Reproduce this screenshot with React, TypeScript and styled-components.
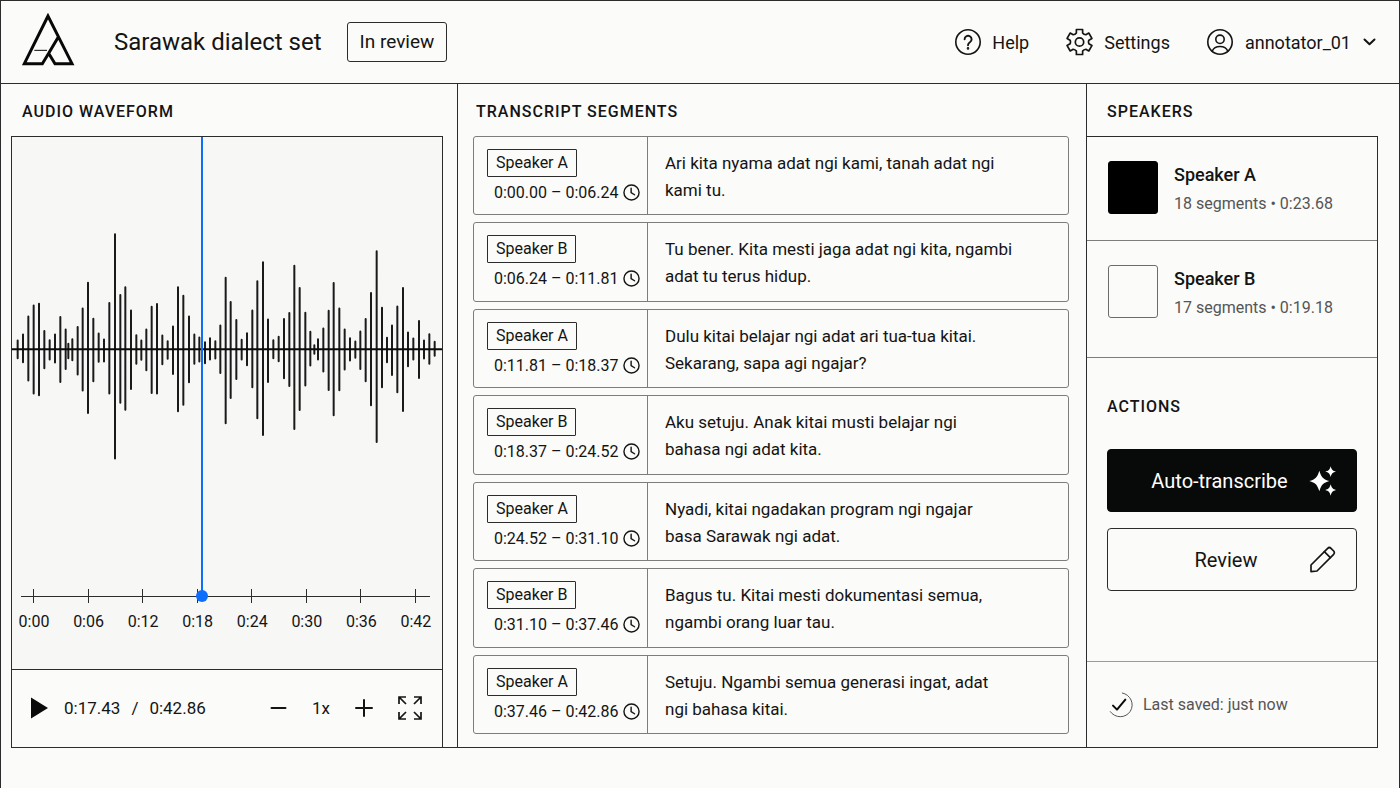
import React from "react";
import styled, { createGlobalStyle } from "styled-components";

const ink = "#141414";
const line = "#2c2c2c";
const softLine = "#7d7d7d";
const muted = "#555555";
const accent = "#0d6efd";

const GlobalStyle = createGlobalStyle`
  *, *::before, *::after { box-sizing: border-box; }
  body {
    margin: 0;
    background: #fbfbf9;
    color: ${ink};
    font-family: Roboto, "Liberation Sans", sans-serif;
    font-size: 16px;
  }
  h1, h2, h3, p, ol, ul { margin: 0; padding: 0; font-weight: 400; }
  ol, ul { list-style: none; }
  svg { display: block; flex: none; }
  button { font: inherit; color: inherit; cursor: pointer; }
`;

const Frame = styled.div`
  display: flex;
  flex-direction: column;
  min-height: 100vh;
  padding-bottom: 40px;
  border: 1px solid ${line};
  border-bottom: 0;
`;

const Header = styled.header`
  display: flex;
  align-items: center;
  height: 83px;
  padding: 0 23px 0 20px;
  border-bottom: 1px solid ${line};
`;

const HomeLink = styled.a`
  padding-bottom: 6px;
`;

const ProjectTitle = styled.h1`
  margin-left: 39px;
  font-size: 24px;
  line-height: 32px;
`;

const StatusBadge = styled.span`
  margin-left: 25px;
  padding: 0 12px;
  border: 1px solid ${line};
  border-radius: 3px;
  font-size: 19px;
  line-height: 38px;
`;

const HeaderNav = styled.nav`
  display: flex;
  align-items: center;
  gap: 37px;
  margin-left: auto;
  font-size: 18px;
`;

const NavLink = styled.a`
  display: flex;
  align-items: center;
  gap: 11px;
  color: inherit;
  text-decoration: none;
`;

const AccountButton = styled.button`
  display: flex;
  align-items: center;
  gap: 12px;
  padding: 0;
  border: 0;
  background: none;
`;

const Workspace = styled.main`
  flex: 1;
  display: grid;
  grid-template-columns: minmax(0, 447fr) minmax(0, 628fr) minmax(0, 292fr);
  margin: 0 21px 0 10px;
  border-bottom: 1px solid ${line};
`;

const Column = styled.section<{ $rule?: "left" | "right" }>`
  display: flex;
  flex-direction: column;
  ${(p) => p.$rule && `border-${p.$rule}: 1px solid ${line};`}
`;

const SectionTitle = styled.h2<{ $inset?: number }>`
  padding-left: ${(p) => p.$inset ?? 0}px;
  font-size: 16px;
  font-weight: 500;
  line-height: 24px;
  letter-spacing: 1px;
`;

const ColumnTitle = styled(SectionTitle)`
  padding-top: 16px;
  padding-bottom: 12px;
`;

const WavePanel = styled.div`
  flex: 1;
  display: flex;
  flex-direction: column;
  margin-right: 14px;
  border: 1px solid ${line};
  border-bottom: 0;
`;

const Stage = styled.div`
  position: relative;
  flex: 1;
  display: flex;
  flex-direction: column;
  background: #f7f7f6;
`;

const WaveChart = styled.svg`
  flex: 1;
  width: 100%;
  min-height: 320px;
`;

const Ruler = styled.div`
  height: 107px;
  padding: 27px 12px 0 9px;
`;

const Ticks = styled.ol`
  display: flex;
  justify-content: space-between;
  height: 14px;
  padding: 0 14px 0 12px;
  background: linear-gradient(${line}, ${line}) center / 100% 1px no-repeat;
`;

const Tick = styled.li`
  width: 1px;
  background: ${line};
`;

const TickLabels = styled.ol`
  display: flex;
  justify-content: space-between;
  margin: 7px -2px 0 -3px;
`;

const TickLabel = styled.li`
  width: 32px;
  line-height: 24px;
  text-align: center;
`;

const Playhead = styled.div`
  position: absolute;
  top: 0;
  bottom: 73px;
  width: 2px;
  background: ${accent};

  &::after {
    content: "";
    position: absolute;
    left: -5px;
    bottom: -6px;
    width: 12px;
    height: 12px;
    border-radius: 50%;
    background: ${accent};
  }
`;

const Transport = styled.div`
  display: flex;
  align-items: center;
  justify-content: space-between;
  height: 78px;
  padding: 0 20px 2px 18px;
  border-top: 1px solid ${line};
  font-size: 17px;
`;

const TransportGroup = styled.div<{ $gap: number }>`
  display: flex;
  align-items: center;
  gap: ${(p) => p.$gap}px;
`;

const IconButton = styled.button`
  display: flex;
  padding: 0;
  border: 0;
  background: none;
`;

const SegmentList = styled.ol`
  flex: 1;
  display: flex;
  flex-direction: column;
  gap: 7px;
  margin: 0 17px 13px 15px;
`;

const SegmentRow = styled.li`
  flex: 1;
  display: flex;
  border: 1px solid ${softLine};
  border-radius: 3px;
`;

const SegmentMeta = styled.div`
  flex: none;
  width: 174px;
  padding: 12px 7px 0 13px;
  border-right: 1px solid ${softLine};
`;

const SpeakerTag = styled.span`
  display: inline-block;
  padding: 0 8px;
  border: 1px solid ${line};
  border-radius: 1px;
  line-height: 26px;
`;

const SegmentTime = styled.div`
  display: flex;
  align-items: center;
  justify-content: space-between;
  padding-left: 7px;
  line-height: 31px;
`;

const SegmentText = styled.p`
  padding: 13px 16px 8px 17px;
  font-size: 17px;
  line-height: 27px;
`;

const TextLine = styled.span`
  display: block;
`;

const SidePanel = styled.div`
  flex: 1;
  display: flex;
  flex-direction: column;
  border-top: 1px solid ${line};
  border-right: 1px solid ${line};
`;

const SpeakerCard = styled.li<{ $space: number }>`
  display: flex;
  gap: 16px;
  padding: 24px 20px ${(p) => p.$space}px 21px;
  border-bottom: 1px solid ${softLine};
`;

const Swatch = styled.span<{ $filled: boolean }>`
  flex: none;
  width: 50px;
  height: 53px;
  border: 1px solid ${(p) => (p.$filled ? "#000" : "#6c6c6c")};
  border-radius: 3px;
  background: ${(p) => (p.$filled ? "#000" : "transparent")};
`;

const SpeakerName = styled.h3`
  font-size: 18px;
  font-weight: 500;
  line-height: 27px;
`;

const SpeakerStats = styled.p`
  color: ${muted};
  line-height: 31px;
`;

const Actions = styled.div`
  flex: 1;
  display: flex;
  flex-direction: column;
  padding: 37px 20px 24px 20px;
`;

const ActionList = styled.div`
  display: flex;
  flex-direction: column;
  gap: 16px;
  margin-top: 30px;
`;

const ActionButton = styled.button<{ $primary?: boolean }>`
  display: grid;
  grid-template-columns: ${(p) => (p.$primary ? "14px" : "27px")} 1fr 27px;
  align-items: center;
  height: 63px;
  padding: 0 20px;
  border: 1px solid ${(p) => (p.$primary ? "#080a09" : line)};
  border-radius: 4px;
  background: ${(p) => (p.$primary ? "#080a09" : "transparent")};
  color: ${(p) => (p.$primary ? "#ffffff" : ink)};
  font-size: 20px;
`;

const ActionLabel = styled.span`
  grid-column: 2;
  padding-right: 12px;
  text-align: center;
`;

const SaveStatus = styled.p`
  display: flex;
  align-items: center;
  gap: 10px;
  height: 86px;
  padding-left: 22px;
  border-top: 1px solid #9a9a9a;
  color: ${muted};
`;

const bars: [number, number, number][] = [
  [53, 358, 415], [69, 340, 427], [85, 286, 482], [101, 253, 521], [117, 248, 526], [133, 330, 445],
  [149, 357, 419], [165, 340, 428], [181, 288, 486], [197, 325, 447], [205, 368, 415], [217, 354, 421],
  [233, 318, 464], [248, 262, 512], [264, 185, 579], [280, 293, 484], [296, 337, 426], [312, 355, 425],
  [328, 246, 521], [345, 40, 715], [361, 222, 548], [376, 199, 569], [393, 268, 507], [409, 342, 432],
  [424, 358, 420], [439, 325, 451], [455, 257, 519], [471, 249, 521], [487, 343, 433], [503, 360, 417],
  [519, 316, 462], [534, 199, 574], [550, 224, 554], [567, 286, 487], [583, 340, 432], [598, 349, 425],
  [615, 363, 430], [630, 351, 419], [646, 360, 416], [661, 313, 459], [677, 170, 610], [692, 243, 534],
  [709, 297, 477], [725, 356, 419], [741, 336, 436], [757, 268, 502], [772, 181, 595], [789, 124, 645],
  [804, 295, 486], [820, 357, 415], [836, 347, 424], [852, 294, 475], [868, 276, 498], [883, 134, 627],
  [899, 201, 570], [916, 275, 497], [931, 332, 437], [943, 372, 402], [954, 354, 419], [970, 322, 455],
  [986, 269, 510], [1001, 186, 586], [1018, 262, 511], [1034, 325, 449], [1050, 351, 422], [1066, 361, 414],
  [1081, 331, 447], [1097, 294, 484], [1113, 216, 556], [1130, 91, 666], [1146, 260, 502], [1161, 350, 427],
  [1176, 313, 465], [1192, 256, 517], [1209, 201, 573], [1224, 334, 439], [1240, 352, 419], [1257, 300, 474],
  [1272, 358, 416], [1288, 339, 432], [1304, 362, 408],
];

const ticks = ["0:00", "0:06", "0:12", "0:18", "0:24", "0:30", "0:36", "0:42"];

const segments = [
  { speaker: "Speaker A", time: "0:00.00 – 0:06.24", text: ["Ari kita nyama adat ngi kami, tanah adat ngi", "kami tu."] },
  { speaker: "Speaker B", time: "0:06.24 – 0:11.81", text: ["Tu bener. Kita mesti jaga adat ngi kita, ngambi", "adat tu terus hidup."] },
  { speaker: "Speaker A", time: "0:11.81 – 0:18.37", text: ["Dulu kitai belajar ngi adat ari tua-tua kitai.", "Sekarang, sapa agi ngajar?"] },
  { speaker: "Speaker B", time: "0:18.37 – 0:24.52", text: ["Aku setuju. Anak kitai musti belajar ngi", "bahasa ngi adat kita."] },
  { speaker: "Speaker A", time: "0:24.52 – 0:31.10", text: ["Nyadi, kitai ngadakan program ngi ngajar", "basa Sarawak ngi adat."] },
  { speaker: "Speaker B", time: "0:31.10 – 0:37.46", text: ["Bagus tu. Kitai mesti dokumentasi semua,", "ngambi orang luar tau."] },
  { speaker: "Speaker A", time: "0:37.46 – 0:42.86", text: ["Setuju. Ngambi semua generasi ingat, adat", "ngi bahasa kitai."] },
];

const speakers = [
  { name: "Speaker A", stats: "18 segments • 0:23.68", filled: true, space: 21 },
  { name: "Speaker B", stats: "17 segments • 0:19.18", filled: false, space: 34 },
];

const playheadPosition = 0.44;

const stroke = { fill: "none", stroke: "currentColor", strokeLinecap: "round", strokeLinejoin: "round" } as const;

const polar = (degrees: number, radius: number) => {
  const a = (degrees * Math.PI) / 180;
  return `${(14 + radius * Math.cos(a)).toFixed(2)} ${(14 + radius * Math.sin(a)).toFixed(2)}`;
};

// Six teeth, 60 degrees apart, joined by shallow inward curves.
const gearPath =
  [0, 1, 2, 3, 4, 5]
    .map((i) => {
      const a = i * 60 - 90;
      return `${i ? "L" : "M"}${polar(a - 19, 9.6)}L${polar(a - 14, 12.9)}L${polar(a + 14, 12.9)}L${polar(a + 19, 9.6)}Q${polar(a + 30, 8.6)} ${polar(a + 41, 9.6)}`;
    })
    .join("") + "Z";

const Logo = () => (
  <svg width="54" height="54" viewBox="15 15 162 162" fill="none" stroke="#080808" aria-hidden="true">
    <path strokeWidth="9" strokeLinejoin="miter" d="M96 27 25 170H79L98 139 117 170H168ZM98 139 127 90" />
    <path strokeWidth="3" d="M55 130H93" />
  </svg>
);

const HelpIcon = () => (
  <svg width="26" height="26" viewBox="0 0 26 26" strokeWidth="1.6" {...stroke} aria-hidden="true">
    <circle cx="13" cy="13" r="12.2" />
    <path strokeWidth="1.9" d="M9.6 10.3a3.5 3.5 0 1 1 5.3 3c-1.3.8-1.9 1.4-1.9 2.900" />
    <circle cx="13" cy="19.4" r=".5" fill="currentColor" />
  </svg>
);

const GearIcon = () => (
  <svg width="27" height="28" viewBox="0.5 0 27 28" strokeWidth="1.7" {...stroke} aria-hidden="true">
    <path d={gearPath} />
    <circle cx="14" cy="14" r="4.2" />
  </svg>
);

const UserIcon = () => (
  <svg width="26" height="26" viewBox="0 0 26 26" strokeWidth="1.6" {...stroke} aria-hidden="true">
    <circle cx="13" cy="13" r="12.2" />
    <circle cx="13" cy="10.3" r="4.2" />
    <path d="M5.2 22.2c1.3-3.3 4.3-4.7 7.8-4.700s6.500 1.400 7.800 4.700" />
  </svg>
);

const ChevronIcon = () => (
  <svg width="13" height="8" viewBox="0 0 13 8" strokeWidth="2" {...stroke} aria-hidden="true">
    <path d="M1.5 1.5 6.5 6.3 11.5 1.5" />
  </svg>
);

const ClockIcon = () => (
  <svg width="17" height="17" viewBox="0 0 18 18" strokeWidth="1.5" {...stroke} aria-hidden="true">
    <circle cx="9" cy="9" r="8" />
    <path d="M8.6 4.5V9.2L12.2 11.4" />
  </svg>
);

const PlayIcon = () => (
  <svg width="19" height="22" viewBox="0 0 19 22" fill="#0a0a0a" aria-hidden="true">
    <path d="M1 .5 18 11 1 21.5Z" />
  </svg>
);

const MinusIcon = () => (
  <svg width="17" height="18" viewBox="0 0 17 18" strokeWidth="2" {...stroke} aria-hidden="true">
    <path d="M1.5 9H15.5" />
  </svg>
);

const PlusIcon = () => (
  <svg width="18" height="18" viewBox="0 0 18 18" strokeWidth="2" {...stroke} aria-hidden="true">
    <path d="M1 9H17M9 1V17" />
  </svg>
);

const ExpandIcon = () => (
  <svg width="24" height="24" viewBox="0 0 24 24" fill="none" stroke="currentColor" strokeWidth="1.7" aria-hidden="true">
    <path d="M1 8V1H8M1 1 8 8M16 1H23V8M23 1 16 8M1 16V23H8M1 23 8 16M23 16V23H16M23 23 16 16" />
  </svg>
);

const SparklesIcon = () => (
  <svg width="27" height="30" viewBox="686 252 81 90" fill="currentColor" aria-hidden="true">
    <path d="M717 266C723 286 729 292 747 297 729 302 723 308 717 328 711 308 705 302 687 297 705 292 711 286 717 266Z" />
    <path d="M751 253C754 264 757 267 767 269 757 271 754 274 751 285 748 274 745 271 735 269 745 267 748 264 751 253Z" />
    <path d="M751 307C754 318 757 321 767 324 757 327 754 330 751 341 748 330 745 327 735 324 745 321 748 318 751 307Z" />
  </svg>
);

const PencilIcon = () => (
  <svg width="27" height="27" viewBox="692 492 81 81" strokeWidth="5" {...stroke} aria-hidden="true">
    <path d="M698 569V549L748 499Q753 494 758 499L766 507Q770 512 766 517L716 567Z" />
    <path d="M738 509 756 527" />
  </svg>
);

const SavedIcon = () => (
  <svg width="24" height="26" viewBox="86 303 72 78" {...stroke} aria-hidden="true">
    <path strokeWidth="3" d="M126 306A36 36 0 1 1 90 362" />
    <path stroke="#0a0a0a" strokeWidth="6" d="M98 344 110 356 135 326" />
  </svg>
);

export default function App() {
  return (
    <>
      <GlobalStyle />
      <Frame>
        <Header>
          <HomeLink href="#home" aria-label="Home">
            <Logo />
          </HomeLink>
          <ProjectTitle>Sarawak dialect set</ProjectTitle>
          <StatusBadge>In review</StatusBadge>
          <HeaderNav aria-label="Account">
            <NavLink href="#help">
              <HelpIcon />
              Help
            </NavLink>
            <NavLink href="#settings">
              <GearIcon />
              Settings
            </NavLink>
            <AccountButton type="button">
              <UserIcon />
              annotator_01
              <ChevronIcon />
            </AccountButton>
          </HeaderNav>
        </Header>

        <Workspace>
          <Column $rule="right">
            <ColumnTitle $inset={11}>AUDIO WAVEFORM</ColumnTitle>
            <WavePanel>
              <Stage>
                <WaveChart viewBox="36 -249 1290 1272" preserveAspectRatio="none" aria-hidden="true">
                  <path
                    d={bars.map(([x, top, bottom]) => `M${x} ${top + 2}V${bottom - 2}`).join("")}
                    fill="none"
                    stroke="#1a1a1a"
                    strokeWidth="6"
                    strokeLinecap="round"
                  />
                  <path d="M36 386H1326" stroke="#0a0a0a" strokeWidth="6" />
                </WaveChart>
                <Ruler>
                  <Ticks aria-hidden="true">
                    {ticks.map((t) => (
                      <Tick key={t} />
                    ))}
                  </Ticks>
                  <TickLabels>
                    {ticks.map((t) => (
                      <TickLabel key={t}>{t}</TickLabel>
                    ))}
                  </TickLabels>
                </Ruler>
                <Playhead style={{ left: `${playheadPosition * 100}%` }} />
              </Stage>
              <Transport>
                <TransportGroup $gap={15}>
                  <IconButton type="button" aria-label="Play">
                    <PlayIcon />
                  </IconButton>
                  <TransportGroup $gap={11}>
                    <span>0:17.43</span>
                    <span>/</span>
                    <span>0:42.86</span>
                  </TransportGroup>
                </TransportGroup>
                <TransportGroup $gap={25}>
                  <IconButton type="button" aria-label="Slower">
                    <MinusIcon />
                  </IconButton>
                  <span>1x</span>
                  <IconButton type="button" aria-label="Faster">
                    <PlusIcon />
                  </IconButton>
                  <IconButton type="button" aria-label="Full screen">
                    <ExpandIcon />
                  </IconButton>
                </TransportGroup>
              </Transport>
            </WavePanel>
          </Column>

          <Column>
            <ColumnTitle $inset={18}>TRANSCRIPT SEGMENTS</ColumnTitle>
            <SegmentList>
              {segments.map((s) => (
                <SegmentRow key={s.time}>
                  <SegmentMeta>
                    <SpeakerTag>{s.speaker}</SpeakerTag>
                    <SegmentTime>
                      {s.time}
                      <ClockIcon />
                    </SegmentTime>
                  </SegmentMeta>
                  <SegmentText>
                    {s.text.map((t) => (
                      <TextLine key={t}>{t}</TextLine>
                    ))}
                  </SegmentText>
                </SegmentRow>
              ))}
            </SegmentList>
          </Column>

          <Column $rule="left">
            <ColumnTitle $inset={20}>SPEAKERS</ColumnTitle>
            <SidePanel>
              <ul>
                {speakers.map((s) => (
                  <SpeakerCard key={s.name} $space={s.space}>
                    <Swatch $filled={s.filled} />
                    <div>
                      <SpeakerName>{s.name}</SpeakerName>
                      <SpeakerStats>{s.stats}</SpeakerStats>
                    </div>
                  </SpeakerCard>
                ))}
              </ul>
              <Actions>
                <SectionTitle>ACTIONS</SectionTitle>
                <ActionList>
                  <ActionButton type="button" $primary>
                    <ActionLabel>Auto-transcribe</ActionLabel>
                    <SparklesIcon />
                  </ActionButton>
                  <ActionButton type="button">
                    <ActionLabel>Review</ActionLabel>
                    <PencilIcon />
                  </ActionButton>
                </ActionList>
              </Actions>
              <SaveStatus>
                <SavedIcon />
                Last saved: just now
              </SaveStatus>
            </SidePanel>
          </Column>
        </Workspace>
      </Frame>
    </>
  );
}
